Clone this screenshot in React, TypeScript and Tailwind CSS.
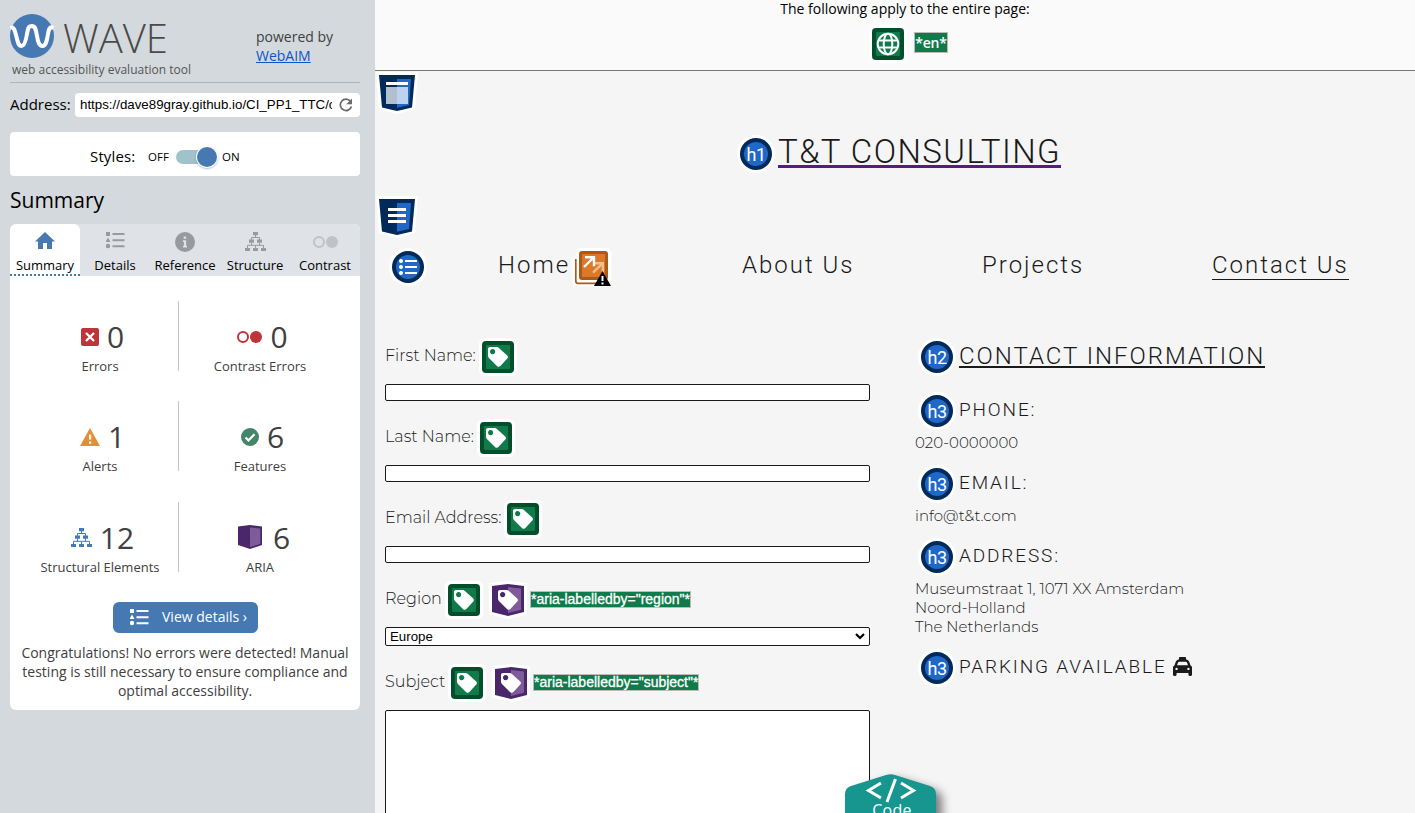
import React from "react";
import { FaTaxi } from "react-icons/fa6";

function WaveLogo() {
  return (
    <svg className="size-11 shrink-0" viewBox="0 0 44 44">
      <circle cx="22" cy="22" r="22" fill="#4678b2" />
      <path d="M.5 14C4 12 5 17 6.500 23S8.500 32 11.500 32S16 26 17 20S18.500 12 22 12S26 16 27 22S29 32 32.500 32S37 26 38 20S40 12 43.500 14" fill="none" stroke="#fff" strokeWidth="4" />
    </svg>
  );
}

function ListIcon({ className }: { className: string }) {
  return (
    <svg className={className} viewBox="0 0 19 17" fill="currentColor">
      <path d="M0 0h4v4H0zM2 5.500l2.500 4.500h-5zM6.500 1h12v2h-12zM6.500 7.200h12v2h-12zM6.500 13.200h12v2h-12z" />
      <circle cx="2" cy="14" r="2.200" />
    </svg>
  );
}

function TreeIcon({ className }: { className: string }) {
  return (
    <svg className={className} viewBox="0 0 21 19" fill="currentColor">
      <path d="M8 0h5v3.200H8zM4 7.500h5v3.300H4zM12 7.500h5v3.300h-5zM0 16h5v3H0zM8 16h5v3H8zM16 16h5v3h-5z" />
      <path d="M10.500 3v2.500M6.500 8V5.500h8V8M6.500 10.500v3M14.500 10.500v3M2.500 16v-2.700h16V16M10.500 13.500V16" fill="none" stroke="currentColor" strokeWidth="1" />
    </svg>
  );
}

function ContrastIcon({ className }: { className: string }) {
  return (
    <svg className={className} viewBox="0 0 25 12">
      <circle cx="6" cy="6" r="5" fill="none" stroke="currentColor" strokeWidth="2" />
      <circle cx="19" cy="6" r="6" fill="currentColor" />
    </svg>
  );
}

function HomeIcon() {
  return (
    <svg className="mt-2 h-[17px] w-5 text-[#4678b2]" viewBox="0 0 20 17" fill="currentColor">
      <path d="M10 0l10 9.500h-3V17h-5v-6H8v6H3V9.500H0z" />
    </svg>
  );
}

function InfoIcon() {
  return (
    <svg className="mt-2 size-5" viewBox="0 0 20 20">
      <circle cx="10" cy="10" r="10" fill="#989b9e" />
      <path d="M8.700 4.500h2.400v2.200H8.700zM8 8.300h3.100v5.500H12v1.600H8v-1.600h.9V9.900H8z" fill="#dfe2e7" />
    </svg>
  );
}

const TAG = "M8 6h6.600c.9 0 1.700.3 2.300.9l8.300 7.500c.9.9 1 2.300.1 3.200l-6.900 7.500c-.9 1-2.300 1-3.200.1l-8.300-8.300C6.300 16.300 6 15.500 6 14.600V8c0-1.100.9-2 2-2zM10.600 8a2.600 2.600 0 1 0 .01 0z";

function GreenIcon({ globe = false }: { globe?: boolean }) {
  return (
    <svg className="size-8 shrink-0 overflow-visible" viewBox="0 0 32 32">
      <rect x="-3" y="-3" width="38" height="38" rx="6" fill="#fff" />
      <rect width="32" height="32" rx="4" fill="#014e2a" />
      <rect x="4" y="4" width="24" height="24" rx="1" fill="#107a4b" />
      {globe ? (
        <g fill="none" stroke="#fff" strokeWidth="2">
          <circle cx="16" cy="16" r="10.300" />
          <ellipse cx="16" cy="16" rx="4.300" ry="10.300" />
          <path d="M6.500 12.600h19M6.500 19.400h19" />
        </g>
      ) : (
        <path d={TAG} fill="#fff" fillRule="evenodd" />
      )}
    </svg>
  );
}

function AriaTag() {
  return (
    <svg className="ml-3 size-8 shrink-0 overflow-visible" viewBox="0 0 32 32">
      <path d="M-3-1L16-3l19 2v31.500L16 35-3 30.500z" fill="#fff" />
      <path d="M0 2l16-2 16 2v26l-16 4-16-4z" fill="#49276a" />
      <path d="M16 3l13 1.500v21.300L16 29z" fill="#7f5b9a" />
      <path d={TAG} fill="#fff" fillRule="evenodd" />
    </svg>
  );
}

function ShieldIcon({ kind }: { kind: "header" | "nav" }) {
  return (
    <svg className="size-9 shrink-0 overflow-visible" viewBox="0 0 36 36">
      <path d="M-3-3h42l-3 37-18 5L0 34z" fill="#fff" />
      <path d="M0 0h36l-3 32.500L18 36 3 32.500z" fill="#002a5a" />
      <path d="M18 4h14l-2 26-12 2.700z" fill="#2068c7" />
      {kind === "header" ? (
        <g fill="#fff">
          <path d="M7 7h22v3H7z" />
          <path d="M7 12h22v17H7z" opacity=".7" />
        </g>
      ) : (
        <path d="M9 9h18v3H9zM9 15h18v3H9zM9 21h18v3H9z" fill="#fff" />
      )}
    </svg>
  );
}

function ListBadge() {
  return (
    <svg className="size-8 shrink-0 overflow-visible" viewBox="0 0 32 32">
      <circle cx="16" cy="16" r="19" fill="#fff" />
      <circle cx="16" cy="16" r="16" fill="#002a5a" />
      <circle cx="16" cy="16" r="12" fill="#2068c7" />
      <path d="M13 9h12v2H13zM13 15h12v2H13zM13 21h12v2H13z" fill="#fff" />
      <path d="M9 8a2 2 0 1 0 .01 0zM9 14a2 2 0 1 0 .01 0zM9 20a2 2 0 1 0 .01 0z" fill="#fff" />
    </svg>
  );
}

function HeadingBadge({ label }: { label: string }) {
  return (
    <span className="flex size-8 shrink-0 items-center justify-center rounded-full border-4 border-[#002a5a] bg-[#2068c7] pt-px font-['Roboto'] text-[18px] leading-none font-normal tracking-[-0.6px] text-white shadow-[0_0_0_3px_#fff]">
      {label}
    </span>
  );
}

function RedundantLinkIcon() {
  return (
    <svg className="ml-[4.500px] h-9 w-9 shrink-0 overflow-visible" viewBox="0 0 36 36">
      <path d="M1 5h30v30.500H2Q-2.500 35.500-2.500 32V9Q-2.500 5 1 5z" fill="#fff" />
      <rect x="1" y="-3" width="35" height="34" rx="5" fill="#fff" />
      <path d="M.8 8v22q0 2.300 2.300 2.300H28" fill="none" stroke="#a95b1b" strokeWidth="1.700" />
      <rect x="4" width="29" height="29" rx="3" fill="#a95b1b" />
      <rect x="7" y="3" width="23" height="23" rx="1" fill="#dc7828" />
      <g fill="none" strokeWidth="2.400">
        <path d="M18.500 12.200h9.300v9M27.800 12.200L18 21.700" stroke="#f0be91" />
        <path d="M10 6.200h9v9M18.700 6.500L9 16" stroke="#fff" />
      </g>
      <path d="M27.500 20l8.500 15H19z" fill="#000" />
      <path d="M26.500 25h2v5h-2zM26.500 31.500h2v2h-2z" fill="#fff" />
    </svg>
  );
}

function Count({ icon, n, label }: { icon: React.ReactNode; n: string; label: string }) {
  return (
    <div className="flex flex-col items-center pt-[15px] text-[#404040]">
      <div className="flex h-[41px] items-center gap-2 pl-[5px] text-[30px] leading-[41px]">
        {icon}
        <span>{n}</span>
      </div>
      <div className="whitespace-nowrap text-[13px] leading-[18px]">{label}</div>
    </div>
  );
}

function CountRow({ children }: { children: React.ReactNode }) {
  return (
    <div className="grid grid-cols-[159px_160px] grid-rows-[70px] gap-px [&>div:first-child]:border-r [&>div:first-child]:border-[#c4c4c4] [&>div:first-child]:pl-[2px]">
      {children}
    </div>
  );
}

function Field({ label, children }: { label: string; children?: React.ReactNode }) {
  return (
    <div className="mb-[21px]">
      <div className="flex h-8 items-center">
        <span className="-mt-[2px] whitespace-nowrap">{label}</span>
        {children}
      </div>
      <div className="mt-[11px] h-[17px] rounded-[2px] border border-[#1a1a1a] bg-white" />
    </div>
  );
}

function InfoHeading({ children, badge = "h3" }: { children: React.ReactNode; badge?: string }) {
  return (
    <div className="ml-[6px] flex h-8 items-center gap-[6px] font-['Roboto'] text-[19px] font-light tracking-[1.850px]">
      <HeadingBadge label={badge} />
      <span className="-mt-[3px] flex items-center whitespace-nowrap">{children}</span>
    </div>
  );
}

function AriaNote({ children }: { children: React.ReactNode }) {
  return (
    <span className="-mt-[2px] ml-[6px] h-[17px] whitespace-nowrap border border-[#bbb] bg-[#107a4b] font-['Liberation_Sans'] text-[14px] font-normal leading-[15px] tracking-normal text-white [-webkit-text-stroke:0.3px_#fff]">
      {children}
    </span>
  );
}

function Sidebar() {
  return (
    <aside className="w-[375px] shrink-0 bg-[#d4d9dd] pl-[10px] pr-[15px] font-['Open_Sans']">
      <header className="flex h-[83px] border-b border-[#b0b4b8] pt-[14px]">
        <div className="w-[246px]">
          <div className="flex h-12 items-start gap-[9px]">
            <WaveLogo />
            <span className="mt-[2px] text-[40px] font-light leading-[44px] text-[#4a4a4a]">WAVE</span>
          </div>
          <div className="pl-[2px] text-[12px] leading-[16px] text-[#555]">web accessibility evaluation tool</div>
        </div>
        <div className="pt-[13px] text-[14px] leading-[19px] text-[#404040]">
          powered by
          <br />
          <span className="text-[#0a55cc] underline">WebAIM</span>
        </div>
      </header>
      <div className="mt-[10px] flex h-6 items-center justify-between">
        <span className="-mt-[2px] text-[15px]">Address:</span>
        <div className="flex h-6 w-[285px] items-center rounded bg-white pl-[5px] font-['Liberation_Sans']">
          <span className="w-[252px] overflow-hidden whitespace-nowrap text-[13.300px]">https://dave89gray.github.io/CI_PP1_TTC/contact.html</span>
          <svg className="ml-[7px] size-[14px]" viewBox="0 0 14 14">
            <path d="M11.500 3.300A5.700 5.700 0 1 0 12.500 8.500" fill="none" stroke="#6a6a6a" strokeWidth="1.700" />
            <path d="M13 .5v5.700H7.300z" fill="#6a6a6a" />
          </svg>
        </div>
      </div>
      <div className="mt-[15px] flex h-11 items-center rounded bg-white pl-20 pt-[5px] text-[11.500px]">
        <span className="w-[58px] text-[15px] tracking-[0.150px]">Styles:</span>
        <span className="w-7">OFF</span>
        <span className="flex h-[14px] w-[38px] items-center justify-end rounded-full bg-[#9fc2cb]">
          <span className="-mr-[3px] size-5 rounded-full bg-[#4678b2] shadow-[0_0_0_1px_#fff,0_1px_3px_#666]" />
        </span>
        <span className="ml-[8px]">ON</span>
      </div>
      <h2 className="mt-[9px] h-[39px] text-[21px] leading-[31px]">Summary</h2>
      <section className="overflow-hidden rounded-md bg-white">
        <div className="flex h-[52px] bg-[#dfe2e7] text-[13px] text-black [&>div]:flex [&>div]:w-[70px] [&>div]:flex-col [&>div]:items-center [&>div]:justify-between [&>div]:text-[#989b9e] [&_span]:leading-[21px] [&_span]:text-black">
          <div className="rounded-t-md border-b-2 border-dotted border-[#4678b2] bg-white">
            <HomeIcon />
            <span className="-mb-[2px]">Summary</span>
          </div>
          <div>
            <ListIcon className="mt-2 h-[17px] w-[19px]" />
            <span>Details</span>
          </div>
          <div>
            <InfoIcon />
            <span>Reference</span>
          </div>
          <div>
            <TreeIcon className="mt-2 h-[19px] w-[21px]" />
            <span>Structure</span>
          </div>
          <div>
            <ContrastIcon className="mt-3 h-3 w-[25px] text-[#bfc2c6]" />
            <span>Contrast</span>
          </div>
        </div>
        <div className="px-[10px] pt-[25px]">
          <CountRow>
            <Count n="0" label="Errors" icon={
              <svg className="size-[18px]" viewBox="0 0 18 18"><rect width="18" height="18" rx="2" fill="#bb353a" /><path d="M5 5l8 8M13 5l-8 8" stroke="#fff" strokeWidth="2.300" /></svg>
            } />
            <Count n="0" label="Contrast Errors" icon={<ContrastIcon className="h-3 w-[25px] text-[#bb353a]" />} />
          </CountRow>
          <div className="h-[30px]" />
          <CountRow>
            <Count n="1" label="Alerts" icon={
              <svg className="h-[18px] w-5" viewBox="0 0 20 18"><path d="M10 0l10 18H0z" fill="#e58f35" /><path d="M9 6.500h2.200v5H9zM9 13.500h2.200v2.200H9z" fill="#fff" /></svg>
            } />
            <Count n="6" label="Features" icon={
              <svg className="size-[18px]" viewBox="0 0 18 18"><circle cx="9" cy="9" r="9" fill="#44856a" /><path d="M4.500 9.500l3 2.800 6-6" stroke="#fff" strokeWidth="2.300" fill="none" /></svg>
            } />
          </CountRow>
          <div className="h-[31px]" />
          <CountRow>
            <Count n="12" label="Structural Elements" icon={<TreeIcon className="h-[19px] w-[21px] text-[#4678b2]" />} />
            <Count n="6" label="ARIA" icon={
              <svg className="ml-[3px] mr-[3px] -mt-[2px] size-6" viewBox="0 0 24 24"><path d="M0 1.500L12 0l12 1.500V20l-12 4-12-4z" fill="#49276a" /><path d="M12 2.500l10.300 1V19L12 22z" fill="#7f5b9a" /></svg>
            } />
          </CountRow>
        </div>
        <div className="flex flex-col items-center pb-[10px] pt-[30px] text-center text-[14px] leading-[19px] text-[#404040]">
          <div className="flex h-[31px] w-[145px] items-center rounded-md bg-[#4678b2] pl-[17px] text-white">
            <ListIcon className="h-[17px] w-[19px]" />
            <span className="-mt-[2px] ml-[13.500px] whitespace-nowrap">View details ›</span>
          </div>
          <p className="mt-[10px] whitespace-nowrap">
            Congratulations! No errors were detected! Manual
            <br />
            testing is still necessary to ensure compliance and
            <br />
            optimal accessibility.
          </p>
        </div>
      </section>
    </aside>
  );
}

export default function App() {
  return (
    <div className="flex h-[813px] w-[1415px] overflow-hidden bg-[#f5f5f5] text-black">
      <Sidebar />
      <main className="relative flex-1 overflow-hidden text-[#1a1a1a]">
        <div className="h-[71px] border-b border-[#777b74] bg-[#fafafa] pl-5 text-center font-['Open_Sans'] text-[14px] leading-[18px] text-black">
          The following apply to the entire page:
          <div className="mt-[10px] flex items-center justify-center gap-[10px] pl-[10px]">
            <GreenIcon globe />
            <span className="-mt-[3px] h-[21px] border border-[#bbb] bg-[#107a4b] font-semibold leading-[19px] tracking-[-0.200px] text-white">*en*</span>
          </div>
        </div>
        <div className="h-[67px] pl-1 pt-1">
          <ShieldIcon kind="header" />
        </div>
        <div className="flex h-[61px] gap-[6px] pl-[365px]">
          <HeadingBadge label="h1" />
          <h1 className="-mt-[5px] h-[35px] whitespace-nowrap border-b-[3px] border-[#551a8b] font-['Roboto'] text-[33px] font-light leading-[38px] tracking-[1.420px]">T&amp;T CONSULTING</h1>
        </div>
        <div className="h-[52px] pl-1">
          <ShieldIcon kind="nav" />
        </div>
        <nav className="flex h-[90px] items-start pl-[17px] font-['Roboto'] text-[24px] font-light leading-[28px] tracking-[2px]">
          <ListBadge />
          <div className="ml-[74px] flex w-[244px] items-start whitespace-nowrap">Home<RedundantLinkIcon /></div>
          <div className="w-[240px]">About Us</div>
          <div className="w-[230px]">Projects</div>
          <div className="whitespace-nowrap border-b border-[#1a1a1a]">Contact Us</div>
        </nav>
        <div className="flex pl-[10px]">
          <form className="w-[485px] font-['Montserrat','Inter',sans-serif] text-[16px] font-light">
            <Field label="First Name:"><span className="ml-[6px] flex"><GreenIcon /></span></Field>
            <Field label="Last Name:"><span className="ml-[6px] flex"><GreenIcon /></span></Field>
            <Field label="Email Address:"><span className="ml-[6px] flex"><GreenIcon /></span></Field>
            <div className="flex h-8 items-center">
              <span className="-mt-[2px] mr-[6px] w-[57px]">Region</span>
              <GreenIcon />
              <AriaTag />
              <AriaNote>*aria-labelledby="region"*</AriaNote>
            </div>
            <div className="mt-[11px] flex h-[19px] items-center justify-between rounded-[2px] border border-[#1a1a1a] bg-white pl-1 pr-1 font-['Liberation_Sans'] text-[13.300px] font-normal text-black">
              Europe
              <svg className="h-[6px] w-[10px] overflow-visible" viewBox="0 0 10 6"><path d="M1 0l4 4 4-4" fill="none" stroke="#000" strokeWidth="2.200" /></svg>
            </div>
            <div className="mt-[21px] flex h-8 items-center">
              <span className="-mt-[2px] mr-[6px] w-[60px]">Subject</span>
              <GreenIcon />
              <AriaTag />
              <AriaNote>*aria-labelledby="subject"*</AriaNote>
            </div>
            <div className="mt-[11px] h-[140px] rounded-[2px] border border-[#1a1a1a] bg-white" />
          </form>
          <div className="ml-[45px] font-['Montserrat','Inter',sans-serif] text-[15px] font-light leading-[19px]">
            <div className="ml-[6px] flex h-[54px] items-start gap-[6px]">
              <HeadingBadge label="h2" />
              <h2 className="h-[27px] whitespace-nowrap border-b-2 border-[#1a1a1a] font-['Roboto'] text-[24px] font-light leading-[30px] tracking-[1.980px]">CONTACT INFORMATION</h2>
            </div>
            <InfoHeading>PHONE:</InfoHeading>
            <p className="mb-[16px] mt-[6px]">020-0000000</p>
            <InfoHeading>EMAIL:</InfoHeading>
            <p className="mb-[16px] mt-[6px]">info@t&amp;t.com</p>
            <InfoHeading>ADDRESS:</InfoHeading>
            <p className="mb-[16px] mt-[6px]">
              Museumstraat 1, 1071 XX Amsterdam
              <br />
              Noord-Holland
              <br />
              The Netherlands
            </p>
            <InfoHeading>PARKING AVAILABLE <FaTaxi className="ml-[6px] size-[19px]" /></InfoHeading>
          </div>
        </div>
        <div className="absolute left-[470px] top-[774px] h-[39px] w-[91px]">
          <svg className="absolute left-0 top-0 overflow-visible drop-shadow-[6px_5px_5px_rgba(0,0,0,0.5)]" width="91" height="100" viewBox="0 0 91 100">
            <path d="M41 1Q45.500-.5 50 1L85 12Q91 14 91 20V80L45.500 100 0 80V20Q0 14 6 12z" fill="#16968f" />
            <path d="M36 9L23.500 16.500 36 24M56 9L68.500 16.500 56 24M50.500 5L42 28" fill="none" stroke="#fff" strokeWidth="3" />
          </svg>
          <span className="absolute left-px top-[26px] w-[92px] text-center font-['Open_Sans'] text-[16px] leading-[21px] tracking-[0.3px] text-white">Code</span>
        </div>
      </main>
    </div>
  );
}
